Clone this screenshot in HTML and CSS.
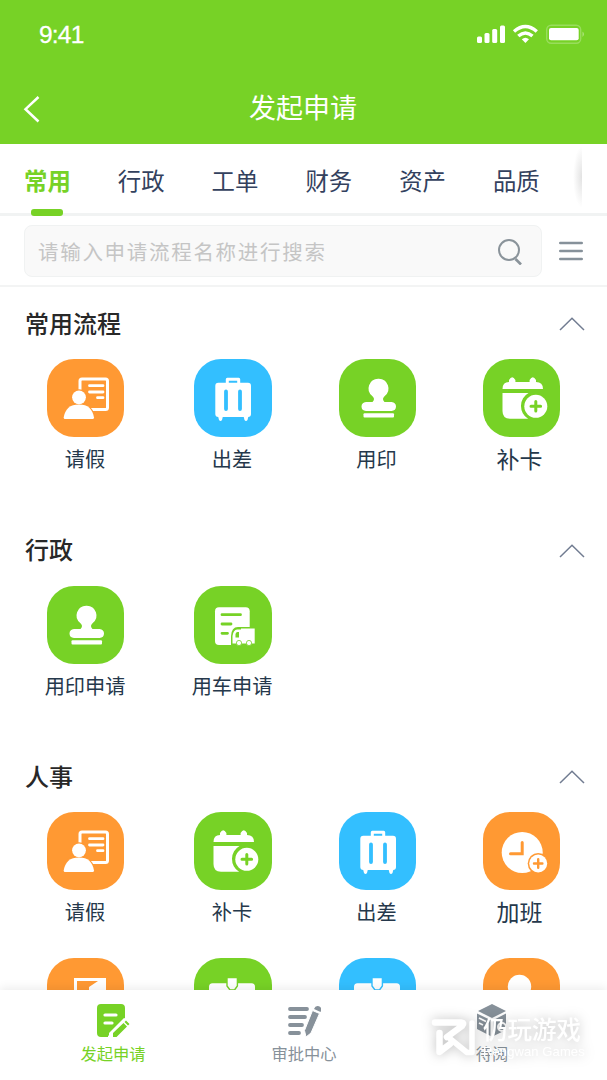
FILE: index.html
```html
<!DOCTYPE html>
<html lang="zh-CN">
<head>
<meta charset="utf-8">
<title>发起申请</title>
<link rel="stylesheet" href="styles.css">
</head>
<body>
<svg class="defs" aria-hidden="true">
  <symbol id="leave" viewBox="0 0 78 78" preserveAspectRatio="xMinYMin slice">
    <rect x="33" y="20" width="27.500" height="30.500" rx="2" fill="none" stroke="#fff" stroke-width="3"/>
    <path d="M42.500 26.700H56M42.500 33H56M50.500 38.700H56" stroke="#fff" stroke-width="2.800" stroke-linecap="round"/>
    <path d="M15 61V56Q18 43 32 43.500Q46 44 49 61Z" fill="#ff9933"/>
    <circle cx="32" cy="38.300" r="8" fill="#ff9933"/>
    <circle cx="32" cy="38.300" r="6.900" fill="#fff"/>
    <path d="M16.700 58.500C18 50 23 45.500 32 45.500S45.500 50 47 58.500Q47 60 45.500 60H18Q16.700 60 16.700 58.500Z" fill="#fff"/>
  </symbol>
  <symbol id="trip" viewBox="0 0 78 78" preserveAspectRatio="xMinYMin slice">
    <path d="M33.300 25V20.300H44.700V25" fill="none" stroke="#fff" stroke-width="3" stroke-linejoin="round"/>
    <rect x="21.300" y="23.700" width="35.700" height="34.300" rx="3" fill="#fff"/>
    <path d="M24 57h5l-1 4q-1.500 2-3 0ZM49.500 57h5l-1 4q-1.500 2-3 0Z" fill="#fff"/>
    <path d="M32 32.500V50M46 32.500V50" stroke="#33bfff" stroke-width="3.800" stroke-linecap="round"/>
  </symbol>
  <symbol id="stamp" viewBox="0 0 78 78" preserveAspectRatio="xMinYMin slice">
    <path d="M39.500 19.700A9.700 9.700 0 0 1 45.500 37.200Q42.500 40 45.500 43H52.500Q57 43.500 57 47.500T52.500 52H27Q22.500 51.500 22.500 47.500T27 43H33.500Q36.500 40 33.500 37.200A9.700 9.700 0 0 1 39.500 19.700Z" fill="#fff"/>
    <rect x="24.500" y="54.200" width="30.500" height="4.200" rx="1" fill="#fff"/>
  </symbol>
  <symbol id="punch" viewBox="0 0 78 78" preserveAspectRatio="xMinYMin slice">
    <path d="M19.500 30Q19.500 23 26 23V21Q29.200 15.600 32.400 21V23H46.600V21Q49.800 15.600 53 21V23Q60 23 60 30Z" fill="#fff"/>
    <path d="M19.500 34H60V59.700H27Q19.500 59.700 19.500 52Z" fill="#fff"/>
    <path d="M45 59.700A15 15 0 0 1 45.500 34H62V61H45Z" fill="#77d226"/>
    <circle cx="52.800" cy="47.300" r="11.500" fill="#fff"/>
    <path d="M48 47.300H57.600M52.800 42.500V52.100" stroke="#77d226" stroke-width="3" stroke-linecap="round"/>
  </symbol>
  <symbol id="car" viewBox="0 0 78 78">
    <rect x="21" y="21.300" width="34.700" height="37.700" rx="4" fill="#fff"/>
    <path d="M28 28.700H46.500M28 38H37M28 47.300H33.500" stroke="#77d226" stroke-width="2.800" stroke-linecap="round"/>
    <path d="M37 60V50Q37.500 41 44 41H62V60Z" fill="#77d226"/>
    <path d="M38.500 57.500V50Q39.500 43.500 43 43.500H47V42.500H60.700V57.500Z" fill="#fff"/>
    <path d="M41.500 51.500V48Q42 46 43.500 46H45V51.500Z" fill="#77d226"/>
    <circle cx="45" cy="57" r="2.600" fill="#fff" stroke="#77d226" stroke-width=".8"/>
    <circle cx="55" cy="57" r="2.600" fill="#fff" stroke="#77d226" stroke-width=".8"/>
  </symbol>
  <symbol id="overtime" viewBox="0 0 78 78" preserveAspectRatio="xMinYMin slice">
    <circle cx="39.200" cy="40.500" r="20.500" fill="#fff"/>
    <path d="M39.200 30.500V41.800H27.500" fill="none" stroke="#ff9933" stroke-width="3" stroke-linecap="round"/>
    <circle cx="55.200" cy="51.500" r="10.500" fill="#ff9933"/>
    <circle cx="55.200" cy="51.500" r="9" fill="#fff"/>
    <path d="M51 51.500H59.400M55.200 47.300V55.700" stroke="#ff9933" stroke-width="2.400" stroke-linecap="round"/>
  </symbol>
  <symbol id="frame" viewBox="0 0 78 78" preserveAspectRatio="xMinYMin slice">
    <path d="M27 60V20H59V60H42V29L51 23H30V60Z" fill="#fff"/>
  </symbol>
  <symbol id="case-green" viewBox="0 0 78 78" preserveAspectRatio="xMinYMin slice">
    <rect x="15" y="25.300" width="46" height="34" rx="3.500" fill="#fff"/>
    <path d="M33 19.500H43.400V28L40.500 32H36L33 28Z" fill="#fff" stroke="#77d226" stroke-width="1.400"/>
  </symbol>
  <symbol id="case-blue" viewBox="0 0 78 78" preserveAspectRatio="xMinYMin slice">
    <rect x="15" y="25.300" width="46" height="34" rx="3.500" fill="#fff"/>
    <path d="M33 19.500H43.400V28L40.500 32H36L33 28Z" fill="#fff" stroke="#33bfff" stroke-width="1.400"/>
  </symbol>
  <symbol id="person" viewBox="0 0 78 78" preserveAspectRatio="xMinYMin slice">
    <circle cx="36.500" cy="28.500" r="11.700" fill="#fff"/>
  </symbol>
  <symbol id="chevron" viewBox="0 0 26 14">
    <path d="M1 13L13 1.200L25 13" fill="none" stroke="#717c91" stroke-width="1.500"/>
  </symbol>
</svg>

<div class="app">
  <header class="header">
    <div class="status">
      <span class="time">9:41</span>
      <svg width="110" height="22" viewBox="0 0 110 22">
        <g fill="#fff">
          <rect x="1" y="13.500" width="5" height="6.500" rx="1.500"/><rect x="8.500" y="10" width="5" height="10" rx="1.500"/><rect x="16.200" y="6" width="5" height="14" rx="1.500"/><rect x="24" y="2.500" width="5" height="17.500" rx="1.500"/>
          <path d="M45.800 16.200Q49.400 13.200 53 16.200L49.400 20Z"/>
        </g>
        <path d="M38 8.500Q49.400-1.500 60.800 8.500M42.300 13Q49.400 6.800 56.500 13" fill="none" stroke="#fff" stroke-width="3.400"/>
        <rect x="70.700" y="2.200" width="34" height="18" rx="4.500" fill="none" stroke="#fff" stroke-opacity=".25" stroke-width="1.400"/>
        <rect x="73" y="5" width="29.700" height="12.300" rx="2" fill="#fff"/>
        <path d="M106.500 8.500Q109.500 11.200 106.500 14Z" fill="#fff" fill-opacity=".4"/>
      </svg>
    </div>
    <div class="titlebar">
      <svg class="back" width="18" height="28" viewBox="0 0 18 28"><path d="M15.500 2L2.500 14.200L15.500 26.500" fill="none" stroke="#fff" stroke-width="2.500"/></svg>
      <h1>发起申请</h1>
    </div>
  </header>

  <nav class="tabs">
    <span class="tab active">常用</span><span class="tab">行政</span><span class="tab">工单</span><span class="tab">财务</span><span class="tab">资产</span><span class="tab">品质</span>
    <i class="edge"></i>
  </nav>

  <div class="searchbar">
    <div class="search">
      <span>请输入申请流程名称进行搜索</span>
      <svg width="26" height="28" viewBox="0 0 26 28" fill="none" stroke="#8a939a"><circle cx="12" cy="13" r="10" stroke-width="2"/><path d="M18.500 22L24 27.500" stroke-width="2.600"/></svg>
    </div>
    <svg width="24" height="22" viewBox="0 0 24 22"><path d="M1.300 3H22.700M1.300 11H22.700M1.300 19H22.700" stroke="#86919a" stroke-width="2.600" stroke-linecap="round"/></svg>
  </div>

  <main class="content">
    <section class="group">
      <div class="group-head"><h2>常用流程</h2><svg width="26" height="14"><use href="#chevron"/></svg></div>
      <div class="grid">
        <div class="item"><svg class="tile orange"><use href="#leave"/></svg><span>请假</span></div>
        <div class="item"><svg class="tile wide blue"><use href="#trip"/></svg><span>出差</span></div>
        <div class="item"><svg class="tile green"><use href="#stamp"/></svg><span>用印</span></div>
        <div class="item"><svg class="tile green"><use href="#punch"/></svg><span class="large">补卡</span></div>
      </div>
    </section>
    <section class="group">
      <div class="group-head"><h2>行政</h2><svg width="26" height="14"><use href="#chevron"/></svg></div>
      <div class="grid">
        <div class="item"><svg class="tile green"><use href="#stamp"/></svg><span>用印申请</span></div>
        <div class="item"><svg class="tile wide green"><use href="#car"/></svg><span>用车申请</span></div>
      </div>
    </section>
    <section class="group">
      <div class="group-head"><h2>人事</h2><svg width="26" height="14"><use href="#chevron"/></svg></div>
      <div class="grid">
        <div class="item"><svg class="tile orange"><use href="#leave"/></svg><span>请假</span></div>
        <div class="item"><svg class="tile wide green"><use href="#punch"/></svg><span>补卡</span></div>
        <div class="item"><svg class="tile blue"><use href="#trip"/></svg><span>出差</span></div>
        <div class="item"><svg class="tile orange"><use href="#overtime"/></svg><span class="large">加班</span></div>
        <div class="item"><svg class="tile orange"><use href="#frame"/></svg></div>
        <div class="item"><svg class="tile wide green"><use href="#case-green"/></svg></div>
        <div class="item"><svg class="tile blue"><use href="#case-blue"/></svg></div>
        <div class="item"><svg class="tile orange"><use href="#person"/></svg></div>
      </div>
    </section>
  </main>

  <footer class="bottom">
    <div class="nav-item current">
      <svg width="34" height="36" viewBox="0 0 34 36">
        <path d="M5 1H25Q29 1 29 5V18L12 33V34H5Q1 34 1 30V5Q1 1 5 1Z" fill="#77d226"/>
        <path d="M9 12H20M9 20H16" stroke="#fff" stroke-width="3.200" stroke-linecap="round"/>
        <path d="M13 36V30L28 15L36 18L24 36Z" fill="#fff"/>
        <path d="M17 34V30L27.500 20L31 23.500L20.500 34ZM28.500 19L30 17.500L33.500 21L32 22.500Z" fill="#77d226"/>
      </svg>
      <span>发起申请</span>
    </div>
    <div class="nav-item">
      <svg width="34" height="36" viewBox="0 0 34 36">
        <path d="M3 6H20M3 14H18M3 22H15M3 30H12" stroke="#87919a" stroke-width="3.800" stroke-linecap="round"/>
        <path d="M25.500 7.500L32.500 10.500L24 30L19 34L17.500 27.500Z" fill="#87919a" stroke="#fff"/>
        <path d="M27 6Q28.500 2 32 3.300T33.500 9Z" fill="#87919a"/>
      </svg>
      <span>审批中心</span>
    </div>
    <div class="nav-item">
      <svg width="34" height="36" viewBox="0 0 34 36">
        <path d="M17 1L31 8L17 15L3 8ZM2 10.500L15.500 17V33L2 26ZM18.500 17L31 10.500V27L18.500 33Z" fill="#87919a"/>
        <path d="M4 15L11 18.500M4 20L8 22" stroke="#fff" stroke-width="1.800"/>
        <circle cx="27" cy="24" r="4" fill="#87919a" stroke="#fff" stroke-width="2"/>
      </svg>
      <span>待阅</span>
    </div>
  </footer>

  <div class="watermark">
    <svg width="48" height="44" viewBox="0 0 48 44" fill="none" stroke="#fff" stroke-linejoin="round" stroke-linecap="round">
      <path d="M5 6.500H31Q35 7 32 10L17 21" stroke-width="6.500"/>
      <path d="M9.500 17V36L20 28" stroke-width="6.500"/>
      <path d="M18 21L37 36.500H42V7" stroke-width="5.500"/>
    </svg>
    <div class="brand"><b>仍玩游戏</b><small>Rengwan Games</small></div>
  </div>
</div>
</body>
</html>
```
FILE: styles.css
```css
* { box-sizing: border-box; }
body {
  margin: 0;
  background: #fff;
  font-family: "Noto Sans", "Noto Sans CJK SC", sans-serif;
}
h1, h2 { margin: 0; }
svg { flex: none; display: block; }
.defs { position: absolute; width: 0; height: 0; }
.app {
  position: relative;
  width: 607px;
  height: 1080px;
  display: flex;
  flex-direction: column;
  overflow: hidden;
}

.header { flex: none; height: 144px; background: #77d226; color: #fff; }
.status {
  height: 70px;
  padding: 0 21px 3px 39px;
  display: flex;
  align-items: center;
  justify-content: space-between;
}
.time { font: 500 24.500px/30px "Liberation Sans", sans-serif; padding-top: 3px; letter-spacing: -.800px; -webkit-text-stroke: .3px #fff; }
.titlebar {
  height: 74px;
  padding: 2px 250px 0 23px;
  display: flex;
  align-items: center;
  justify-content: space-between;
}
.back { margin-top: 2px; }
.titlebar h1 { font-size: 27px; font-weight: 400; line-height: 40px; white-space: nowrap; }

.tabs {
  flex: none;
  height: 72px;
  padding-left: 24px;
  display: flex;
  gap: 47px;
  border-bottom: 3px solid #f1f3f3;
  position: relative;
}
.tab {
  width: 46.800px;
  font-size: 23.400px;
  line-height: 75px;
  height: 69px;
  color: #33415e;
  white-space: nowrap;
  position: relative;
}
.active { color: #77d226; font-weight: 700; }
.active::after {
  content: "";
  position: absolute;
  left: 7px;
  bottom: -3px;
  width: 32px;
  height: 7px;
  border-radius: 3px;
  background: #77d226;
}
.edge {
  position: absolute;
  right: 25px;
  top: 2px;
  width: 9px;
  height: 62px;
  background: radial-gradient(ellipse at right center, #e2e2e2, #fff 70%);
}

.searchbar {
  flex: none;
  height: 71px;
  padding: 9px 24px;
  display: flex;
  align-items: center;
  justify-content: space-between;
  border-bottom: 2px solid #f3f4f4;
}
.search {
  width: 518px;
  height: 52px;
  padding: 0 18px 0 13px;
  display: flex;
  align-items: center;
  justify-content: space-between;
  border: 1px solid #f0f2f2;
  border-radius: 8px;
  background: #f9f9f9;
  color: #c5c5c5;
  font-size: 20.500px;
  letter-spacing: 1.700px;
}

.content { flex: 1; min-height: 0; overflow: hidden; }
.group { height: 226.700px; padding-top: 16px; }
.group-head {
  height: 40px;
  padding: 0 22px 0 25px;
  display: flex;
  align-items: center;
  justify-content: space-between;
}
.group-head h2 { font-size: 24px; font-weight: 500; color: #282828; line-height: 40px; padding-top: 1px; }
.group-head svg { margin-top: 2px; }
.grid {
  padding: 16px 0 0 47px;
  display: grid;
  grid-template-columns: 147px 144.500px 144px 78px;
  row-gap: 32px;
}
.item {
  width: 77px;
  height: 114px;
  display: flex;
  flex-direction: column;
  align-items: center;
}
.tile { width: 77px; height: 78px; border-radius: 27px; }
.wide { width: 78px; }
.orange { background: #ff9933; }
.blue { background: #33bfff; }
.green { background: #77d226; }
.item span {
  margin: 7px 1px 0 0;
  color: #25384b;
  font-size: 20.200px;
  line-height: 30px;
  white-space: nowrap;
}
.item .large { font-size: 23px; margin-right: 3px; }

.bottom {
  position: relative;
  flex: none;
  height: 90px;
  padding: 13px 0 0 18px;
  display: grid;
  grid-template-columns: 190px 192px 184px;
  background: #fff;
  box-shadow: 0 -2px 9px rgba(0, 0, 0, .08);
}
.nav-item {
  display: flex;
  flex-direction: column;
  align-items: center;
  color: #87919a;
  font-size: 16.300px;
  line-height: 24px;
}
.nav-item span { margin-top: 3px; }
.current { color: #77d226; }

.watermark {
  position: absolute;
  left: 430px;
  top: 1016px;
  display: flex;
  gap: 5px;
  color: #fff;
  filter: drop-shadow(0 0 6px rgba(0, 0, 0, .26));
}
.brand { display: flex; flex-direction: column; }
.brand b { font-size: 24.500px; line-height: 27px; font-weight: 500; }
.brand small { font: 13px/17px "Liberation Sans", sans-serif; white-space: nowrap; letter-spacing: .100px; }
```
